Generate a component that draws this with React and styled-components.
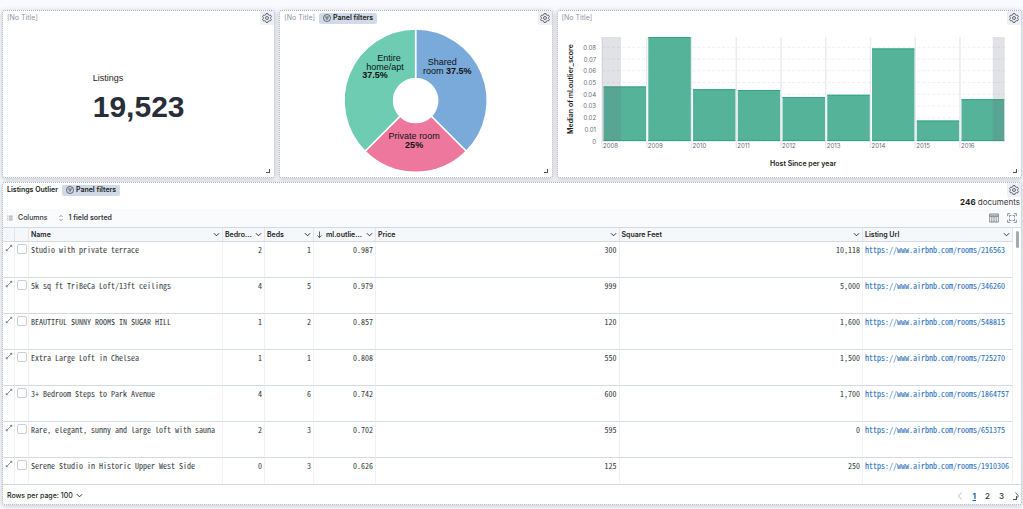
import React from "react";
import styled, { createGlobalStyle, css } from "styled-components";

const GlobalStyle = createGlobalStyle`
  *, *::before, *::after { box-sizing: border-box; }
  body {
    margin: 0;
    background: #f9fafe;
    color: #343741;
    font: 7px/10px Inter, "Liberation Sans", sans-serif;
  }
  button { font: inherit; color: inherit; background: none; border: 0; padding: 0; cursor: pointer; }
`;

const Dashboard = styled.main`
  height: 100vh;
  min-height: 300px;
  padding: 10px 1px 4px 2px;
  display: flex;
  flex-direction: column;
  gap: 4px;
`;

const TopRow = styled.div`
  display: grid;
  grid-template-columns: 273fr 273fr 465fr;
  gap: 4px;
`;

const PanelBox = styled.section`
  display: flex;
  flex-direction: column;
  min-width: 0;
  min-height: ${(p) => (p.$grow ? "0" : "168px")};
  flex: ${(p) => (p.$grow ? "1" : "none")};
  position: relative;
  background: #fff;
  border: 1px dotted #a9afba;
  border-radius: 3px;
  box-shadow: 0 1px 5px rgba(70, 78, 95, 0.3);
`;

const PanelHeader = styled.header`
  display: flex;
  align-items: center;
  gap: 4px;
  height: 14px;
  padding-left: 4px;
`;

const PanelTitle = styled.h2`
  margin: 0;
  font-size: 7px;
  line-height: 10px;
  font-weight: ${(p) => (p.$muted ? 400 : 600)};
  color: ${(p) => (p.$muted ? "#8d94a1" : "#1a1c21")};
`;

const FilterBadge = styled.button`
  display: flex;
  align-items: center;
  gap: 2px;
  height: 11px;
  padding: 0 4px;
  border-radius: 2px;
  background: #d1dbe8;
  color: #1a1c21;
  font-weight: 600;
`;

const GearButton = styled.button`
  display: grid;
  place-items: center;
  width: 14px;
  height: 14px;
  margin-left: auto;
  border-radius: 0 2px 0 2px;
  background: #eef0f5;
  color: #50555f;
`;

const ResizeCorner = styled.span`
  position: absolute;
  right: 4px;
  bottom: 4px;
  width: 4px;
  height: 4px;
  border-right: 1px solid #50555f;
  border-bottom: 1px solid #50555f;
`;

const Metric = styled.div`
  flex: 1;
  display: flex;
  flex-direction: column;
  align-self: center;
  justify-content: center;
  font-family: "Liberation Sans", Arial, sans-serif;
`;
const MetricLabel = styled.div`
  font-size: 9px;
  line-height: 12px;
  color: #1a1c21;
`;
const MetricValue = styled.div`
  font-size: 30px;
  line-height: 46px;
  font-weight: 700;
  color: #292d38;
`;

const Drawing = styled.svg`
  display: block;
  width: 100%;
  overflow: visible;
`;

const PieText = styled.text`
  font: 9px "Liberation Sans", Arial, sans-serif;
  fill: #101114;
  text-anchor: middle;
  tspan { font-weight: 700; }
`;

const AxisText = styled.text`
  font-size: 6px;
  fill: #646a77;
  text-anchor: ${(p) => (p.$end ? "end" : "start")};
`;
const AxisTitle = styled.text`
  font-size: 7px;
  font-weight: 600;
  fill: #1a1c21;
  text-anchor: middle;
`;

const DocCount = styled.div`
  height: 12px;
  padding: 0 1px 3px 0;
  text-align: right;
  font-size: 8px;
  line-height: 10px;
  strong { font-weight: 700; color: #1a1c21; }
`;

const Toolbar = styled.div`
  display: flex;
  align-items: center;
  height: 18px;
  padding: 0 4px;
  gap: 10px;
  background: #fafbfd;
`;
const ToolButton = styled.button`
  display: flex;
  align-items: center;
  gap: 5px;
  font-weight: ${(p) => (p.$active ? 600 : 500)};
  svg { color: #69707d; }
`;
const ToolbarEnd = styled.div`
  margin-left: auto;
  display: flex;
  gap: 8px;
`;

const GridArea = styled.div`
  flex: 1;
  min-height: 0;
  display: flex;
  overflow: hidden;
  border-top: 1px solid #d3dae6;
  border-bottom: 1px solid #d3dae6;
`;

const Table = styled.table`
  flex: 1;
  width: 100%;
  min-width: 0;
  table-layout: fixed;
  border-collapse: separate;
  border-spacing: 0;
`;

const Col = styled.col`
  width: ${(p) => p.$w};
`;

const cell = css`
  overflow: hidden;
  white-space: nowrap;
  border-right: 1px solid #eef1f6;
  border-bottom: 1px solid #d3dae6;
`;

const HeadCell = styled.th`
  ${cell}
  height: 14px;
  padding: 0 2px;
  border-right-color: #dfe4ed;
  background: #f5f7fb;
  color: #1a1c21;
  font-weight: 600;
  text-align: left;
`;

const HeadContent = styled.div`
  display: flex;
  align-items: center;
  gap: 3px;
  svg { flex: none; }
  button { display: flex; margin-left: auto; }
`;

const Cell = styled.td`
  ${cell}
  height: 36px;
  padding: ${(p) => (p.$tight ? "2px 0 0 2px" : "3px 2px 0")};
  vertical-align: top;
  font: 8px/10px "Noto Sans Mono CJK SC", "Liberation Mono", monospace;
  text-align: ${(p) => (p.$num ? "right" : "left")};
  button { display: flex; color: #5a606c; }
`;

const Check = styled.input`
  appearance: none;
  display: block;
  margin: 0;
  width: 10px;
  height: 10px;
  border: 1px solid #c9ced8;
  border-radius: 2px;
  background: #fff;
`;

const UrlLink = styled.a`
  color: #1265b8;
  text-decoration: none;
`;

const ScrollTrack = styled.div`
  flex: none;
  width: 8px;
  padding: 3px 2px 0 3px;
`;
const ScrollThumb = styled.div`
  width: 3px;
  height: 17px;
  border-radius: 2px;
  background: #a5a9b4;
`;

const Footer = styled.footer`
  display: flex;
  align-items: center;
  justify-content: space-between;
  height: 19px;
  padding: 2px 0 0 4px;
`;
const RowsButton = styled.button`
  display: flex;
  align-items: center;
  gap: 3px;
  font-weight: 500;
  color: #1a1c21;
`;
const Pager = styled.nav`
  display: flex;
  align-items: center;
  gap: 9px;
  font-size: 8px;
`;
const PageButton = styled.button`
  display: flex;
  font-weight: ${(p) => (p.$current ? 700 : 500)};
  color: ${(p) => (p.$current ? "#0b5fb5" : p.$off ? "#a2a9b6" : "#343741")};
  text-decoration: ${(p) => (p.$current ? "underline" : "none")};
`;

const Icon = ({ size = 8, w = 1.5, children }) => (
  <svg width={size} height={size} viewBox="0 0 16 16" fill="none" stroke="currentColor" strokeWidth={w} aria-hidden="true">
    {children}
  </svg>
);

const Gear = () => (
  <Icon size={10} w={1.4}>
    <path d="M6.4 1h3.2l.6 2 1.3.7 2-.4L15.100 6l-1.400 1.500v1L15.100 10l-1.600 2.700-2-.4-1.300.7-.6 2H6.400l-.6-2-1.300-.7-2 .4L.9 10l1.400-1.500v-1L.9 6l1.600-2.700 2 .4L5.800 3z" />
    <circle cx="8" cy="8" r="2.4" />
  </Icon>
);
const FilterCircle = () => (
  <Icon w={1.2}>
    <circle cx="8" cy="8" r="7" />
    <path d="M4 6h8M5.5 8.5h5M7 11h2" />
  </Icon>
);
const Chevron = () => (
  <Icon size={7} w={2}>
    <path d="M2 5l6 6 6-6" />
  </Icon>
);
const ArrowDown = () => (
  <Icon size={7}>
    <path d="M8 1v14M3 10l5 5 5-5" />
  </Icon>
);
const ListIcon = () => (
  <Icon size={6} w={1.8}>
    <path d="M5 3h10M5 8h10M5 13h10M1 3h2M1 8h2M1 13h2" />
  </Icon>
);
const SortIcon = () => (
  <Icon size={6} w={2}>
    <path d="M4 5l4-4 4 4M4 11l4 4 4-4" />
  </Icon>
);
const DensityIcon = () => (
  <Icon size={10} w={1.2}>
    <path d="M1 1.5h14v13H1zM1 3.5h14M1 5.5h14M4.5 5.5v9M11.5 5.5v9M8 7v6M7 7h2M7 13h2" />
  </Icon>
);
const FullScreenIcon = () => (
  <Icon size={10} w={1.2}>
    <path d="M1 5V1h4M11 1h4v4M15 11v4h-4M5 15H1v-4M4 7V4h3M9 4h3v3M12 9v3H9M7 12H4V9" />
  </Icon>
);
const ExpandIcon = () => (
  <Icon size={8} w={1.4}>
    <path d="M10 2.5h3.5V6M13.5 2.5l-11 11M2.5 10v3.500H6" />
  </Icon>
);

function Panel({ title, filtered, grow, children }) {
  return (
    <PanelBox $grow={grow}>
      <PanelHeader>
        <PanelTitle $muted={!title}>{title || "[No Title]"}</PanelTitle>
        {filtered && (
          <FilterBadge type="button">
            <FilterCircle />
            Panel filters
          </FilterBadge>
        )}
        <GearButton type="button" aria-label="Panel options">
          <Gear />
        </GearButton>
      </PanelHeader>
      {children}
      <ResizeCorner />
    </PanelBox>
  );
}

function RoomTypePie() {
  return (
    <Drawing viewBox="0 0 271 150" role="img" aria-label="Listings by room type">
      <g stroke="#fff" strokeWidth="1.5">
        <path fill="#79aad9" d="M135.500 4A71.500 71.500 0 0 1 186.060 126.060L151.060 91.060A22 22 0 0 0 135.500 53.500Z" />
        <path fill="#ee789d" d="M186.060 126.060A71.500 71.500 0 0 1 84.940 126.060L119.940 91.060A22 22 0 0 0 151.060 91.060Z" />
        <path fill="#6dccb1" d="M84.940 126.060A71.500 71.500 0 0 1 135.500 4V53.500A22 22 0 0 0 119.940 91.060Z" />
      </g>
      <PieText x="109" y="36">Entire</PieText>
      <PieText x="105" y="45">home/apt</PieText>
      <PieText x="95" y="53"><tspan>37.5%</tspan></PieText>
      <PieText x="162" y="40">Shared</PieText>
      <PieText x="167" y="49">room <tspan>37.5%</tspan></PieText>
      <PieText x="134" y="114">Private room</PieText>
      <PieText x="134" y="123"><tspan>25%</tspan></PieText>
    </Drawing>
  );
}

const scores = [
  [2008, 0.0466], [2009, 0.0888], [2010, 0.0443], [2011, 0.0436], [2012, 0.0376],
  [2013, 0.0395], [2014, 0.0791], [2015, 0.0175], [2016, 0.0358],
];

function ScoreChart() {
  const left = 44;
  const base = 116;
  const top = 12;
  const pitch = 44.7;
  const right = left + pitch * scores.length;
  const yOf = (v) => base - v * 1171;
  return (
    <Drawing viewBox="0 0 463 150" role="img" aria-label="Median outlier score per year">
      {[0, 1, 2, 3, 4, 5, 6, 7, 8].map((n) => (
        <g key={n}>
          <path d={`M${left} ${yOf(n / 100)}H${right}`} stroke="#eceff4" strokeDasharray="3 2" />
          <AxisText $end x="38" y={yOf(n / 100) + 2.5}>{n ? `0.0${n}` : "0"}</AxisText>
        </g>
      ))}
      {scores.map(([year, value], i) => {
        const x = left + i * pitch;
        return (
          <g key={year}>
            <path d={`M${x} ${top}V${base + 7}`} stroke="#e9ebf2" strokeWidth="1.5" />
            <rect x={x + 1.5} y={yOf(value)} width={pitch - 2} height={base - yOf(value)} fill="#54b399" />
            <path d={`M${x + 1.5} ${base - 0.5}h${pitch - 2}M${x + 1.5} ${yOf(value) + 0.5}h${pitch - 2}`} stroke="#35a482" />
            <AxisText x={x + 1} y="123">{year}</AxisText>
          </g>
        );
      })}
      <rect x={left} y={top} width="19" height={base - top} fill="#69707d" opacity="0.2" />
      <rect x={right - 12} y={top} width="12" height={base - top} fill="#69707d" opacity="0.2" />
      <AxisTitle x="245" y="141">Host Since per year</AxisTitle>
      <AxisTitle transform="translate(15 64) rotate(-90)">Median of ml.outlier_score</AxisTitle>
    </Drawing>
  );
}

const columns = [
  { label: "Name", width: "194px" },
  { label: "Bedro...", full: "Bedrooms", width: "42px" },
  { label: "Beds", width: "49px" },
  { label: "ml.outlie...", full: "ml.outlier_score", width: "62px", sorted: true },
  { label: "Price", width: "auto" },
  { label: "Square Feet", width: "auto" },
  { label: "Listing Url", width: "150px" },
];

const rows = [
  ["Studio with private terrace", "2", "1", "0.987", "300", "10,118", "216563"],
  ["5k sq ft TriBeCa Loft/13ft ceilings", "4", "5", "0.979", "999", "5,000", "346260"],
  ["BEAUTIFUL SUNNY ROOMS IN SUGAR HILL", "1", "2", "0.857", "120", "1,600", "548815"],
  ["Extra Large Loft in Chelsea", "1", "1", "0.808", "550", "1,500", "725270"],
  ["3+ Bedroom Steps to Park Avenue", "4", "6", "0.742", "600", "1,700", "1864757"],
  ["Rare, elegant, sunny and large loft with sauna", "2", "3", "0.702", "595", "0", "651375"],
  ["Serene Studio in Historic Upper West Side", "0", "3", "0.626", "125", "250", "1910306"],
];

function ListingsTable() {
  return (
    <Table>
      <colgroup>
        <Col $w="12px" />
        <Col $w="14px" />
        {columns.map((c) => <Col key={c.label} $w={c.width} />)}
      </colgroup>
      <thead>
        <tr>
          <HeadCell aria-label="Expand" />
          <HeadCell aria-label="Select" />
          {columns.map((c) => (
            <HeadCell key={c.label} title={c.full || c.label}>
              <HeadContent>
                {c.sorted && <ArrowDown />}
                <span>{c.label}</span>
                <button type="button" aria-label={`${c.full || c.label} actions`}><Chevron /></button>
              </HeadContent>
            </HeadCell>
          ))}
        </tr>
      </thead>
      <tbody>
        {rows.map(([name, bedrooms, beds, score, price, feet, id]) => {
          const url = `https://www.airbnb.com/rooms/${id}`;
          return (
            <tr key={id}>
              <Cell $tight><button type="button" aria-label={`Expand ${name}`}><ExpandIcon /></button></Cell>
              <Cell $tight><Check type="checkbox" aria-label={`Select ${name}`} /></Cell>
              <Cell>{name}</Cell>
              <Cell $num>{bedrooms}</Cell>
              <Cell $num>{beds}</Cell>
              <Cell $num>{score}</Cell>
              <Cell $num>{price}</Cell>
              <Cell $num>{feet}</Cell>
              <Cell><UrlLink href={url}>{url}</UrlLink></Cell>
            </tr>
          );
        })}
      </tbody>
    </Table>
  );
}

export default function App() {
  return (
    <>
      <GlobalStyle />
      <Dashboard>
        <TopRow>
          <Panel>
            <Metric>
              <MetricLabel>Listings</MetricLabel>
              <MetricValue>19,523</MetricValue>
            </Metric>
          </Panel>
          <Panel filtered><RoomTypePie /></Panel>
          <Panel><ScoreChart /></Panel>
        </TopRow>
        <Panel title="Listings Outlier" filtered grow>
          <DocCount><strong>246</strong> documents</DocCount>
          <Toolbar>
            <ToolButton type="button"><ListIcon />Columns</ToolButton>
            <ToolButton type="button" $active><SortIcon />1 field sorted</ToolButton>
            <ToolbarEnd>
              <ToolButton type="button" aria-label="Density"><DensityIcon /></ToolButton>
              <ToolButton type="button" aria-label="Full screen"><FullScreenIcon /></ToolButton>
            </ToolbarEnd>
          </Toolbar>
          <GridArea>
            <ListingsTable />
            <ScrollTrack><ScrollThumb /></ScrollTrack>
          </GridArea>
          <Footer>
            <RowsButton type="button">Rows per page: 100 <Chevron /></RowsButton>
            <Pager aria-label="Pages">
              <PageButton type="button" $off aria-label="Previous page"><Icon size={8}><path d="M11 1L5 8l6 7" /></Icon></PageButton>
              <PageButton type="button" $current>1</PageButton>
              <PageButton type="button">2</PageButton>
              <PageButton type="button">3</PageButton>
              <PageButton type="button" aria-label="Next page"><Icon size={8}><path d="M5 1l6 7-6 7" /></Icon></PageButton>
            </Pager>
          </Footer>
        </Panel>
      </Dashboard>
    </>
  );
}
